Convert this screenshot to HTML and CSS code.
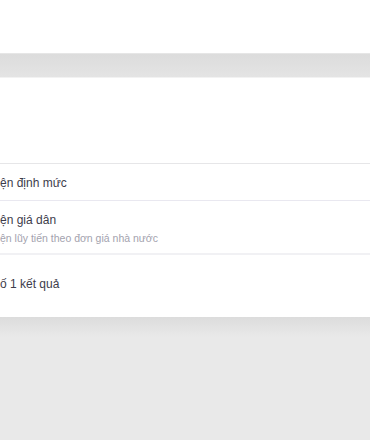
FILE: index.html
```html
<!DOCTYPE html>
<html lang="vi">
<head>
    <meta charset="UTF-8">
    <meta name="viewport" content="width=device-width, initial-scale=1.0">
    <title>Kết quả tìm kiếm</title>
    <link rel="stylesheet" href="styles.css">
</head>
<body>
    <!-- Header area -->
    <div class="top-area"></div>
    <div class="divider-band"></div>

    <!-- Results panel -->
    <div class="results-panel">
        <div class="panel-head"></div>
        <ul class="result-list">
            <li class="result-item single">
                <span class="item-title">ện định mức</span>
            </li>
            <li class="result-item">
                <span class="item-title">ện giá dân</span>
                <span class="item-desc">ện lũy tiến theo đơn giá nhà nước</span>
            </li>
        </ul>
        <div class="result-count">ố 1 kết quả</div>
    </div>

    <div class="page-bottom"></div>
</body>
</html>
```

FILE: styles.css
```css
* {
    margin: 0;
    padding: 0;
    box-sizing: border-box;
}

html, body {
    height: 100%;
}

body {
    font-family: "Liberation Sans", Arial, sans-serif;
    background: #e9e9e9;
    overflow: hidden;
}

.top-area {
    height: 53px;
    background: #ffffff;
}

.divider-band {
    height: 25px;
    background: linear-gradient(#dcdcdc, #e4e4e4);
    border-top: 1px solid #e6e6e6;
    border-bottom: 1px solid #f2f2f2;
}

.results-panel {
    background: #ffffff;
    height: 239px;
}

.panel-head {
    height: 86px;
    border-bottom: 1px solid #e6e6e8;
}

.result-list {
    list-style: none;
}

.result-item {
    display: flex;
    flex-direction: column;
    justify-content: center;
    gap: 5px;
    border-bottom: 1px solid #e9e8f0;
    height: 54px;
    padding-top: 2px;
}

.result-item.single {
    height: 37px;
    padding-top: 1px;
}

.result-item:last-child {
    border-bottom: 2px solid #f1f1f4;
}

.item-title {
    font-size: 12px;
    color: #3d3c4b;
    line-height: 14px;
}

.item-desc {
    font-size: 10.5px;
    color: #a3a2ae;
    line-height: 12px;
}

.result-count {
    font-size: 12px;
    color: #3d3c4b;
    line-height: 14px;
    padding-top: 22px;
}

.page-bottom {
    height: 20px;
    background: linear-gradient(#dcdcdc, #e9e9e9);
}
```
